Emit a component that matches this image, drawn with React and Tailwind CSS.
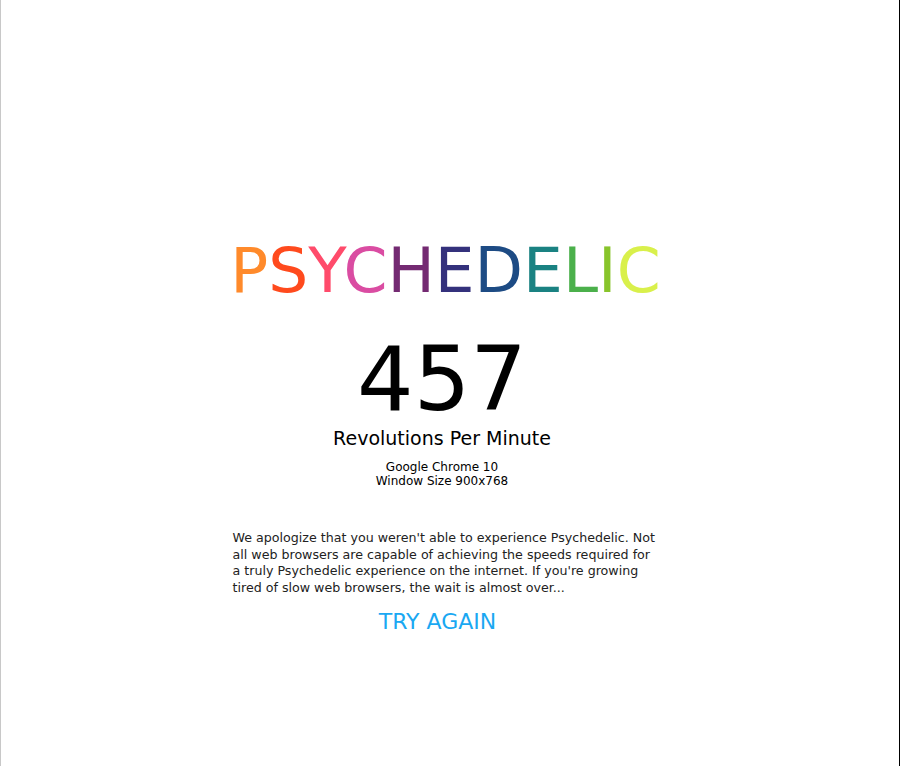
import React from "react";

const letters = [
  ["P", "text-[#ff8a2b]"],
  ["S", "text-[#ff4a1d]"],
  ["Y", "text-[#ff4b6b]"],
  ["C", "text-[#da4ca2]"],
  ["H", "text-[#742a72]"],
  ["E", "text-[#34317c]"],
  ["D", "text-[#1d4b84]"],
  ["E", "text-[#1a8282]"],
  ["L", "text-[#4bb04b]"],
  ["I", "text-[#88c42b]"],
  ["C", "text-[#d9f04b]"],
];

export default function App() {
  return (
    <div className="w-[901px] h-[766px] bg-white flex font-['DejaVu_Sans',Verdana,sans-serif]">
      <div className="w-px h-full bg-[#c8c8c8]" />
      <main className="flex-1 flex flex-col items-center pt-[235px] pr-[16px]">
        <h1 className="pl-[7px] text-[63px] leading-[72px]">
          {letters.map(([ch, color], i) => (
            <span key={i} className={color}>
              {ch}
            </span>
          ))}
        </h1>

        <div className="mt-[27px] text-[89px] leading-[90px] text-black">457</div>
        <div className="mt-[2px] text-[19px] leading-[24px] text-black">Revolutions Per Minute</div>

        <div className="mt-[10px] text-[12px] leading-[14px] text-black text-center">
          <div>Google Chrome 10</div>
          <div>Window Size 900x768</div>
        </div>

        <p className="mt-[42px] ml-[9px] w-[428px] text-[12.65px] leading-[16.7px] text-[#222]">
          We apologize that you weren't able to experience Psychedelic. Not all web browsers are
          capable of achieving the speeds required for a truly Psychedelic experience on the
          internet. If you're growing tired of slow web browsers, the wait is almost over...
        </p>

        <a href="#" className="mt-[12px] pr-[9px] text-[22px] leading-[26px] text-[#1aa8f2]">
          TRY AGAIN
        </a>
      </main>
      <div className="w-px h-full bg-black" />
      <div className="w-px h-full bg-white" />
    </div>
  );
}
